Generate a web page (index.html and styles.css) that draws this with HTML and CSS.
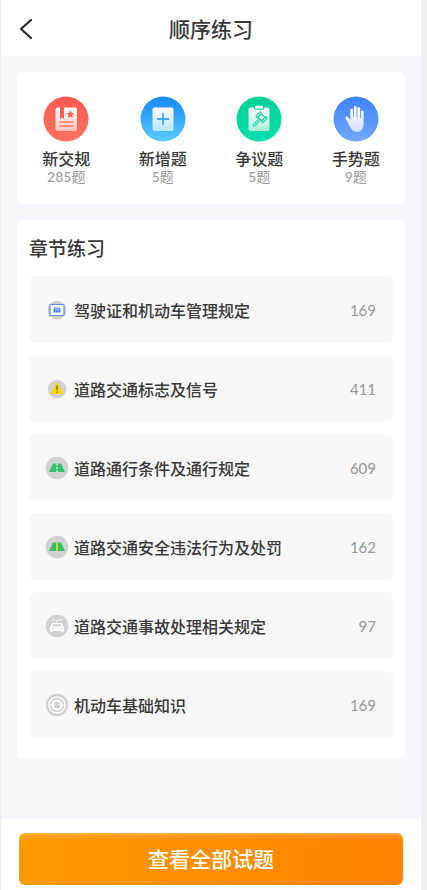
FILE: index.html
```html
<!DOCTYPE html>
<html lang="zh-CN">
<head>
<meta charset="utf-8">
<meta name="viewport" content="width=device-width, initial-scale=1">
<title>顺序练习</title>
<link rel="stylesheet" href="styles.css">
</head>
<body>
<div class="app">
  <header class="header">
    <button class="back" type="button" aria-label="返回">
      <svg width="14" height="22" viewBox="0 0 14 22" fill="none" stroke="#2b2b2b" stroke-width="2.200" stroke-linecap="round" stroke-linejoin="round"><path d="M12 2 2 11l10 9"/></svg>
    </button>
    <h1 class="title">顺序练习</h1>
  </header>

  <main class="content">
    <nav class="card topics">
      <a class="topic" href="#rules">
        <svg class="topic-icon" viewBox="0 0 46 46">
          <defs>
            <linearGradient id="red" x2="0" y2="1"><stop stop-color="#ff5a4c"/><stop offset="1" stop-color="#ff7365"/></linearGradient>
            <linearGradient id="redPaper" x2="0" y2="1"><stop stop-color="#fff"/><stop offset="1" stop-color="#ffc4bd"/></linearGradient>
          </defs>
          <circle cx="23" cy="23" r="22.500" fill="url(#red)"/>
          <path d="M14.500 11.500H17V23l2-1.500 2 1.500V11.500h11a2 2 0 0 1 2 2V33a2 2 0 0 1-2 2H15a2.500 2.500 0 0 1-2.500-2.500v-19a2 2 0 0 1 2-2Z" fill="url(#redPaper)"/>
          <path d="m27.300 14.300 1.200 2.500 2.700.4-2 1.800.6 2.700-2.500-1.300-2.400 1.300.5-2.700-1.900-1.800 2.700-.4Z" fill="#ff6255"/>
          <path d="M16.500 26h14M16.500 30h14" stroke="#ff7769" stroke-width="1.300"/>
        </svg>
        <span class="topic-name">新交规</span>
        <span class="topic-count">285题</span>
      </a>
      <a class="topic" href="#new">
        <svg class="topic-icon" viewBox="0 0 46 46">
          <defs>
            <linearGradient id="blue" x2="0" y2="1"><stop stop-color="#1688fb"/><stop offset="1" stop-color="#5bccff"/></linearGradient>
            <linearGradient id="bluePaper" x2="0" y2="1"><stop stop-color="#fff"/><stop offset="1" stop-color="#b9e5ff"/></linearGradient>
          </defs>
          <circle cx="23" cy="23" r="22.500" fill="url(#blue)"/>
          <rect x="12.500" y="11.500" width="21" height="23.500" rx="2" fill="url(#bluePaper)"/>
          <path d="M17 23h12M23 17v12" stroke="#44a9f8" stroke-width="1.800"/>
        </svg>
        <span class="topic-name">新增题</span>
        <span class="topic-count">5题</span>
      </a>
      <a class="topic" href="#disputed">
        <svg class="topic-icon" viewBox="0 0 46 46">
          <defs>
            <linearGradient id="green" x2="0" y2="1"><stop stop-color="#06cf98"/><stop offset="1" stop-color="#05dfab"/></linearGradient>
            <linearGradient id="greenPaper" x2="0" y2="1"><stop stop-color="#fff"/><stop offset="1" stop-color="#a7efd9"/></linearGradient>
          </defs>
          <circle cx="23" cy="23" r="22.500" fill="url(#green)"/>
          <path d="M14.500 11.500H18v1.300a1 1 0 0 0 1 1h8a1 1 0 0 0 1-1v-1.300h3.500a2 2 0 0 1 2 2V33a2 2 0 0 1-2 2h-17a2 2 0 0 1-2-2V13.500a2 2 0 0 1 2-2Z" fill="url(#greenPaper)"/>
          <rect x="19" y="9.800" width="8" height="3" rx="1" fill="#fff"/>
          <g transform="rotate(42 23 24)" fill="none" stroke="#22cda2" stroke-width="1.100" stroke-linejoin="round">
            <rect x="20.300" y="18" width="5.400" height="4.600"/>
            <rect x="18.200" y="17" width="2.100" height="6.600" rx=".8"/>
            <rect x="25.700" y="17" width="2.100" height="6.600" rx=".8"/>
            <path d="M22 22.600V31a1 1 0 0 0 2 0v-8.400"/>
          </g>
        </svg>
        <span class="topic-name">争议题</span>
        <span class="topic-count">5题</span>
      </a>
      <a class="topic" href="#gestures">
        <svg class="topic-icon" viewBox="0 0 46 46">
          <defs>
            <linearGradient id="indigo" x2="0" y2="1"><stop stop-color="#3b82fa"/><stop offset="1" stop-color="#76a8ff"/></linearGradient>
            <linearGradient id="hand" x2="0" y2="1"><stop stop-color="#fff"/><stop offset="1" stop-color="#cfdfff"/></linearGradient>
          </defs>
          <circle cx="23" cy="23" r="22.500" fill="url(#indigo)"/>
          <path d="M17.300 24V14a1.350 1.350 0 0 1 2.700 0v7h.8v-9.500a1.400 1.400 0 0 1 2.800 0V21h.8v-8.500a1.400 1.400 0 0 1 2.800 0V22h.8v-6a1.300 1.300 0 0 1 2.600 0v12.500c0 4-2.500 7.300-6.300 7.300-4 0-6-2.300-7.500-5.300l-4.300-8.200c-.9-1.800 1.200-2.800 2.400-1.400Z" fill="url(#hand)"/>
        </svg>
        <span class="topic-name">手势题</span>
        <span class="topic-count">9题</span>
      </a>
    </nav>

    <section class="card chapters">
      <h2 class="section-title">章节练习</h2>
      <ul class="chapter-list">
        <li><a class="chapter" href="#c1">
          <svg class="chapter-icon" viewBox="0 0 24 24"><circle cx="12" cy="12" r="9.300" fill="#cecece"/><rect x="5" y="6.500" width="14" height="11" rx=".8" fill="#fff" stroke="#5c8df5" stroke-width="1.200"/><path d="m8.500 11.500 1-2h5l1 2v3h-7Z" fill="#4d83f4"/><path d="M10.300 11.200h3.400M10 13h1M13 13h1" stroke="#fff" stroke-width=".8"/></svg>
          <span class="chapter-name">驾驶证和机动车管理规定</span><span class="chapter-count">169</span></a></li>
        <li><a class="chapter" href="#c2">
          <svg class="chapter-icon" viewBox="0 0 24 24"><circle cx="12" cy="12" r="9.300" fill="#d2d2d5"/><path d="m12 6.500 5.500 9.800h-11Z" fill="#fbd600" stroke="#fbd600" stroke-width="1.600" stroke-linejoin="round"/><path d="M12 8.500v4.800M12 14.500v1.500" stroke="#76651c" stroke-width="1.300"/></svg>
          <span class="chapter-name">道路交通标志及信号</span><span class="chapter-count">411</span></a></li>
        <li><a class="chapter" href="#c3">
          <svg class="chapter-icon" viewBox="0 0 24 24"><circle cx="12" cy="12" r="11.300" fill="#d2d2d2"/><path d="M8 7.500h8l4 8.500H4Z" fill="#35c46e"/><path d="M12 7.500v2M12 11v2M12 14.300V16" stroke="#d9efe1" stroke-width="1.500"/></svg>
          <span class="chapter-name">道路通行条件及通行规定</span><span class="chapter-count">609</span></a></li>
        <li><a class="chapter" href="#c4">
          <svg class="chapter-icon" viewBox="0 0 24 24"><circle cx="12" cy="12" r="11.300" fill="#d2d2d2"/><path d="M8 7.500h8l4 8.500H4Z" fill="#35bd6c"/><path d="M12 7.500V16" stroke="#d5d52b" stroke-width="2"/></svg>
          <span class="chapter-name">道路交通安全违法行为及处罚</span><span class="chapter-count">162</span></a></li>
        <li><a class="chapter" href="#c5">
          <svg class="chapter-icon" viewBox="0 0 24 24"><circle cx="12" cy="12" r="11.300" fill="#d2d2d2"/><path d="m7 9-1.200 3.500-.8.800V18h2.500v-1h9v1H19v-4.700l-.8-.8L17 9Z" fill="#fff"/><path d="m8.200 10.300-.6 2h8.800l-.6-2Z" fill="#d2d2d2"/><path d="M6.500 14.500h2M15.500 14.500h2" stroke="#d2d2d2" stroke-width="1.200"/><path d="m8 5 1.500 2M11.200 7h2M16 5l-1.500 2" stroke="#fff" stroke-width="1.100"/></svg>
          <span class="chapter-name">道路交通事故处理相关规定</span><span class="chapter-count">97</span></a></li>
        <li><a class="chapter" href="#c6">
          <svg class="chapter-icon" viewBox="0 0 24 24"><circle cx="12" cy="12" r="11.300" fill="#d2d2d2"/><g fill="none" stroke="#fff"><circle cx="12" cy="12" r="8" stroke-width="1.400"/><circle cx="12" cy="12" r="4.500" stroke-width="1.800"/><path d="M5.500 12h4M14.500 12h4" stroke-width="1.400"/></g></svg>
          <span class="chapter-name">机动车基础知识</span><span class="chapter-count">169</span></a></li>
      </ul>
    </section>
  </main>

  <footer class="footer">
    <button class="view-all" type="button">查看全部试题</button>
  </footer>
</div>
</body>
</html>
```
FILE: styles.css
```css
* { box-sizing: border-box; }

body {
  margin: 0;
  background: #efefef;
  color: #383838;
  font-family: Lato, "Noto Sans CJK SC", sans-serif;
  font-size: 16px;
}

a { color: inherit; text-decoration: none; }

button {
  border: 0;
  padding: 0;
  font-family: inherit;
  cursor: pointer;
}

.app {
  display: flex;
  flex-direction: column;
  min-height: 100vh;
  margin: 0 6px 0 1px;
  background: #f6f7fd;
}

.header {
  display: grid;
  grid-template-columns: 40px 1fr 40px;
  align-items: center;
  height: 56px;
  padding-top: 2px;
  background: #fff;
}

.back {
  display: flex;
  justify-content: flex-end;
  padding-right: 8px;
  background: none;
}

.title {
  margin: 0;
  font-size: 21px;
  font-weight: 500;
  line-height: 32px;
  text-align: center;
}

.content {
  display: flex;
  flex-direction: column;
  flex: 1;
  gap: 16px;
  padding: 16px;
}

.card {
  border-radius: 6px;
  background: #fff;
}

.topics {
  display: grid;
  grid-template-columns: repeat(4, 1fr);
  padding: 24px 1px 19px;
}

.topic {
  display: flex;
  flex-direction: column;
  align-items: center;
}

.topic-icon { width: 46px; height: 46px; }

.topic-name {
  margin-top: 7px;
  font-weight: 500;
  line-height: 20px;
}

.topic-count {
  color: #999;
  font-size: 14px;
  line-height: 16px;
}

.chapters { padding: 17px 12px 21px; }

.section-title {
  margin: 0 0 15px;
  font-size: 19px;
  font-weight: 500;
  line-height: 24px;
}

.chapter-list {
  display: grid;
  gap: 12px;
  margin: 0;
  padding: 0;
  list-style: none;
}

.chapter {
  display: flex;
  align-items: center;
  gap: 5px;
  min-height: 67px;
  padding: 0 17px 0 16px;
  border-radius: 6px;
  background: #f8f8f8;
}

.chapter-icon { flex: none; width: 24px; height: 24px; }

.chapter-name { flex: 1; font-weight: 500; }

.chapter-count { color: #999; font-size: 15px; }

.footer {
  padding: 14px 18px 5px;
  background: #fff;
}

.view-all {
  display: block;
  width: 100%;
  height: 52px;
  border-radius: 6px;
  background: linear-gradient(90deg, #ff9b00, #ff8200);
  box-shadow: inset 0 4px 5px -2px rgba(255, 210, 150, 0.6);
  color: #fff;
  font-size: 21px;
  font-weight: 500;
  line-height: 50px;
}
```
